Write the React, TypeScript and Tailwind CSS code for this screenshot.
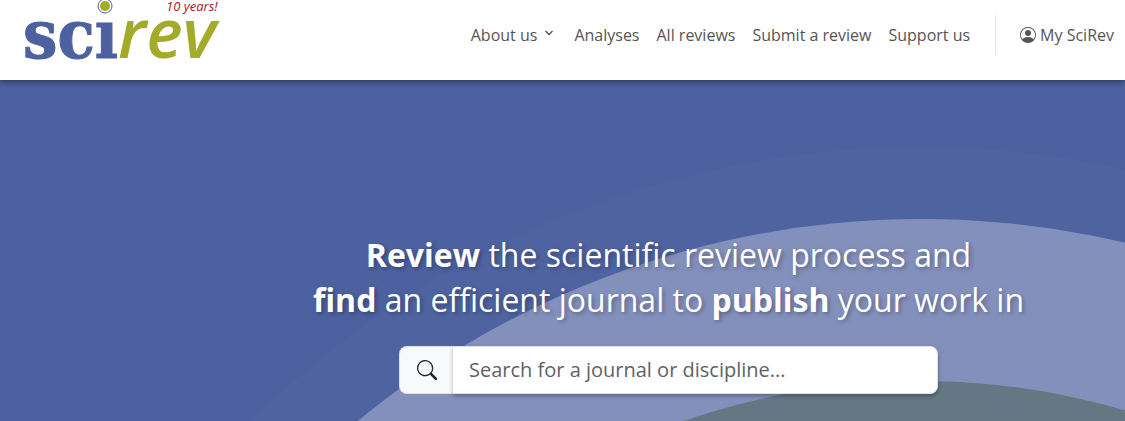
import { useState } from "react";

const links = ["Analyses", "All reviews", "Submit a review", "Support us"];

function Logo() {
  return (
    <a href="#" aria-label="SciRev home" className="shrink-0">
      <svg width="224" height="80" viewBox="0 0 224 80" aria-hidden="true">
        <text x="23" y="58" fill="#4d61a0" stroke="#4d61a0" strokeWidth="1" className="font-['DejaVu_Serif_Condensed','DejaVu_Serif',serif] text-[68px] font-bold">scı</text>
        <text x="118" y="58" fill="#a4ab2b" className="font-['Open_Sans',sans-serif] text-[69px] font-semibold italic">rev</text>
        <circle cx="105" cy="6" r="7" fill="#fff" stroke="#4d61a0" strokeWidth="1" />
        <circle cx="105" cy="6" r="5" fill="#a4ab2b" />
        <text x="166" y="11" fill="#a32020" className="font-['Open_Sans',sans-serif] text-[13px] font-medium italic">10 years!</text>
      </svg>
    </a>
  );
}

function Header() {
  return (
    <header className="relative z-10 flex h-20 items-start justify-between bg-white pr-[11px] shadow-[0_2px_6px_rgba(0,0,0,0.45)]">
      <Logo />
      <nav className="flex items-center gap-[17px] pt-[15px] whitespace-nowrap text-[#555]">
        <button type="button" className="flex items-center gap-2 pr-1">
          About us
          <svg width="8" height="8" viewBox="0 0 16 16" fill="none" stroke="currentColor" strokeWidth="3" className="mb-1" aria-hidden="true">
            <path d="M1 4l7 7 7-7" />
          </svg>
        </button>
        {links.map((label) => (
          <a key={label} href="#">{label}</a>
        ))}
        <a href="#" className="ml-2 flex h-10 items-center gap-1 border-l border-gray-200 pl-6">
          <svg width="16" height="16" viewBox="0 0 16 16" fill="currentColor" aria-hidden="true">
            <path d="M11 6a3 3 0 1 1-6 0 3 3 0 0 1 6 0" />
            <path fillRule="evenodd" d="M0 8a8 8 0 1 1 16 0A8 8 0 0 1 0 8m8-7a7 7 0 0 0-5.468 11.37C3.242 11.226 4.805 10 8 10s4.757 1.225 5.468 2.37A7 7 0 0 0 8 1" />
          </svg>
          My SciRev
        </a>
      </nav>
    </header>
  );
}

export default function App() {
  const [query, setQuery] = useState("");

  return (
    <div className="flex min-h-screen flex-col bg-[#4d61a0] font-['Open_Sans',sans-serif] text-base">
      <Header />
      <main className="relative flex-1 overflow-hidden pb-[27px] pl-[212px]">
        {/* Concentric arcs behind the search form */}
        <svg className="absolute top-0 left-0" width="1880" height="341" viewBox="0 80 1880 341" aria-hidden="true">
          <circle cx="921" cy="1105" r="958" fill="#4f63a1" />
          <circle cx="921" cy="1105" r="886" fill="#8490bc" />
          <circle cx="921" cy="1105" r="724" fill="#657782" />
        </svg>

        <div className="relative flex flex-col items-center pt-[152px]">
          <h1 className="text-center text-[32px] leading-[45px] font-normal text-white [text-shadow:2px_2px_4px_rgba(0,0,0,0.3)]">
            <strong>Review</strong> the scientific review process and
            <br />
            <strong>find</strong> an efficient journal to <strong>publish</strong> your work in
          </h1>
          <form className="mt-6 flex h-12 w-[539px] max-w-full text-xl" onSubmit={(e) => e.preventDefault()}>
            <button type="submit" aria-label="Search" className="flex w-[54px] items-center justify-center rounded-l-lg border border-r-0 border-[#dee2e6] bg-[#f8f9fa] text-[#212529]">
              <svg width="20" height="20" viewBox="0 0 16 16" fill="currentColor" aria-hidden="true">
                <path d="M11.742 10.344a6.5 6.5 0 1 0-1.397 1.398h-.001q.044.06.098.115l3.85 3.85a1 1 0 0 0 1.415-1.414l-3.85-3.85a1 1 0 0 0-.115-.1zM12 6.5a5.5 5.5 0 1 1-11 0 5.5 5.5 0 0 1 11 0" />
              </svg>
            </button>
            <input
              type="text"
              aria-label="Search for a journal or discipline"
              placeholder="Search for a journal or discipline..."
              value={query}
              onChange={(e) => setQuery(e.target.value)}
              className="min-w-0 flex-1 rounded-r-lg border border-l-0 border-[#dee2e6] bg-white px-4 text-[#212529] shadow-[0_2px_4px_rgba(0,0,0,0.3)] outline-none placeholder:text-[#5f6265]"
            />
          </form>
        </div>
      </main>
    </div>
  );
}
